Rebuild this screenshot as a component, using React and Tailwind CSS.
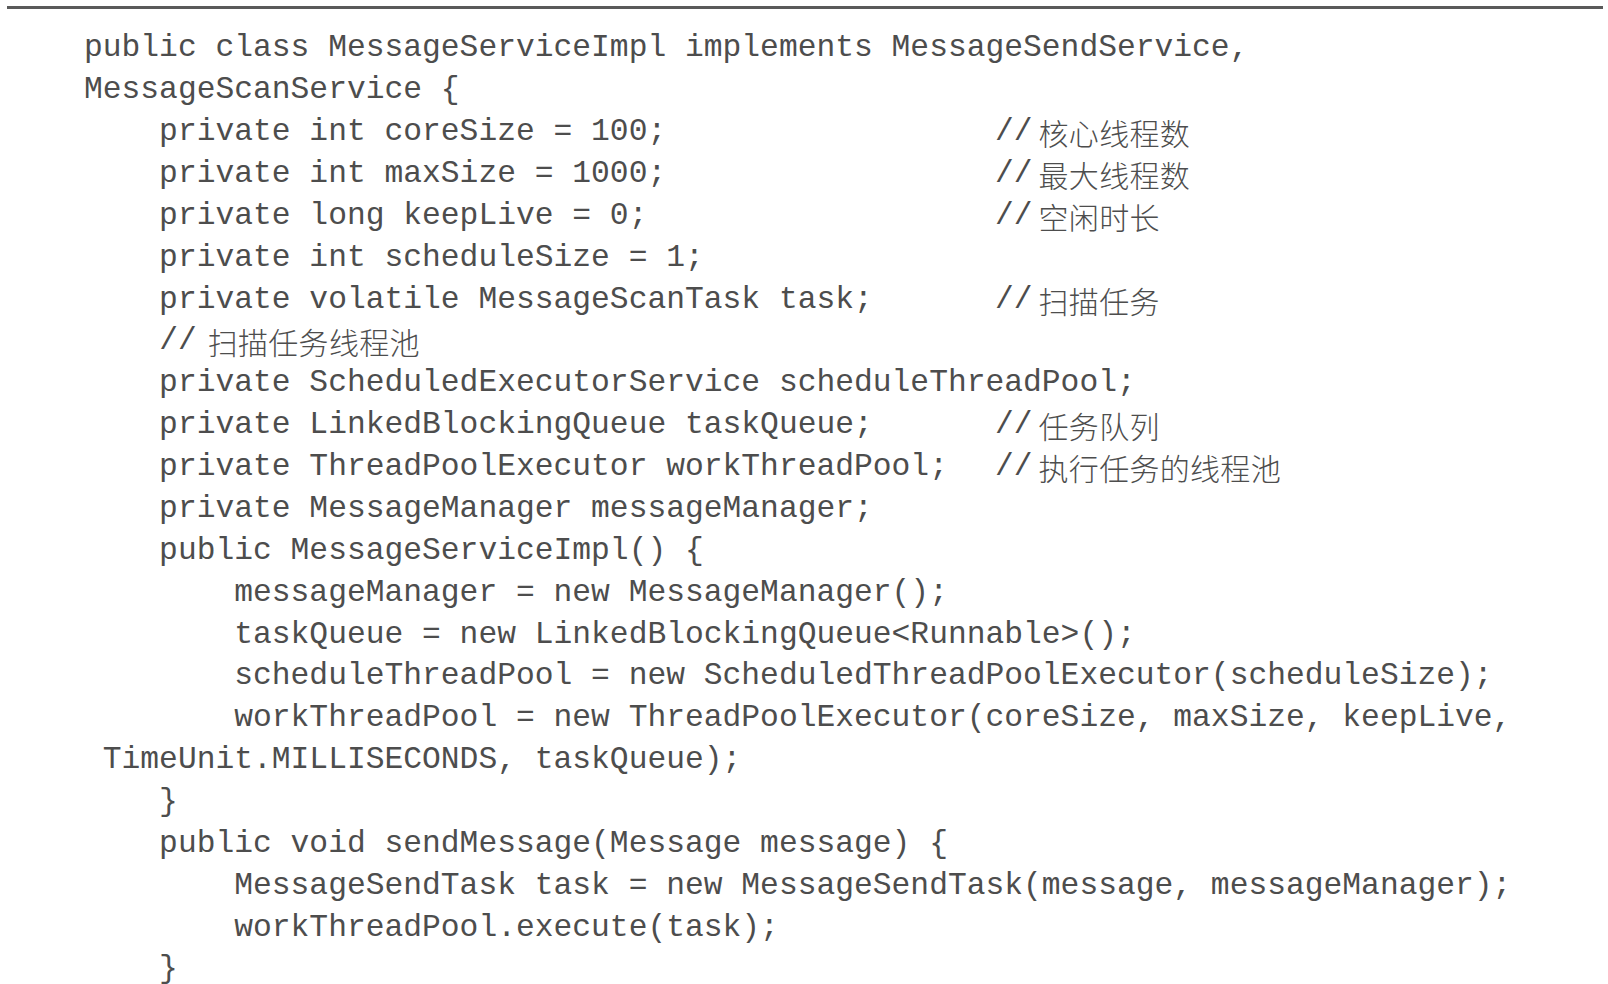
import React from "react";

const lines = [
  { indent: 0, code: "public class MessageServiceImpl implements MessageSendService," },
  { indent: 0, code: "MessageScanService {" },
  { indent: 1, code: "private int coreSize = 100;", note: "核心线程数" },
  { indent: 1, code: "private int maxSize = 1000;", note: "最大线程数" },
  { indent: 1, code: "private long keepLive = 0;", note: "空闲时长" },
  { indent: 1, code: "private int scheduleSize = 1;" },
  { indent: 1, code: "private volatile MessageScanTask task;", note: "扫描任务" },
  { indent: 1, inline: "扫描任务线程池" },
  { indent: 1, code: "private ScheduledExecutorService scheduleThreadPool;" },
  { indent: 1, code: "private LinkedBlockingQueue taskQueue;", note: "任务队列" },
  { indent: 1, code: "private ThreadPoolExecutor workThreadPool;", note: "执行任务的线程池" },
  { indent: 1, code: "private MessageManager messageManager;" },
  { indent: 1, code: "public MessageServiceImpl() {" },
  { indent: 2, code: "messageManager = new MessageManager();" },
  { indent: 2, code: "taskQueue = new LinkedBlockingQueue<Runnable>();" },
  { indent: 2, code: "scheduleThreadPool = new ScheduledThreadPoolExecutor(scheduleSize);" },
  { indent: 2, code: "workThreadPool = new ThreadPoolExecutor(coreSize, maxSize, keepLive," },
  { indent: 0, code: " TimeUnit.MILLISECONDS, taskQueue);" },
  { indent: 1, code: "}" },
  { indent: 1, code: "public void sendMessage(Message message) {" },
  { indent: 2, code: "MessageSendTask task = new MessageSendTask(message, messageManager);" },
  { indent: 2, code: "workThreadPool.execute(task);" },
  { indent: 1, code: "}" },
];

const Comment = ({ text, gap }) => (
  <span className="inline-flex items-center">
    <span>//</span>
    <span
      className={
        (gap ? "ml-[11px]" : "ml-[6px]") +
        " text-[30px] font-['Noto_Sans_CJK_SC',sans-serif] font-light tracking-[0.3px]"
      }>
      {text}
    </span>
  </span>
);

const CodeLine = ({ line }) => {
  const pad = "    ".repeat(line.indent);

  if (line.inline) {
    return (
      <div className="whitespace-pre h-[41.87px] flex items-center">
        <span>{pad}</span>
        <Comment text={line.inline} gap />
      </div>
    );
  }

  return (
    <div className="whitespace-pre h-[41.87px] flex items-center">
      {line.note ? (
        <>
          <span className="w-[911px] shrink-0">{pad + line.code}</span>
          <Comment text={line.note} />
        </>
      ) : (
        <span>{pad + line.code}</span>
      )}
    </div>
  );
};

export default function App() {
  return (
    <div className="w-[1608px] h-[984px] overflow-hidden bg-white">
      <div className="mt-[6px] ml-[7px] mr-[5px] h-[3px] bg-[#5a5a5a]" />
      <div className="pt-[19px] pl-[84px] text-[31.3px] text-[#4d4d4d] font-['Liberation_Mono','Noto_Sans_CJK_SC',monospace]">
        {lines.map((line, i) => (
          <CodeLine key={i} line={line} />
        ))}
      </div>
    </div>
  );
}
